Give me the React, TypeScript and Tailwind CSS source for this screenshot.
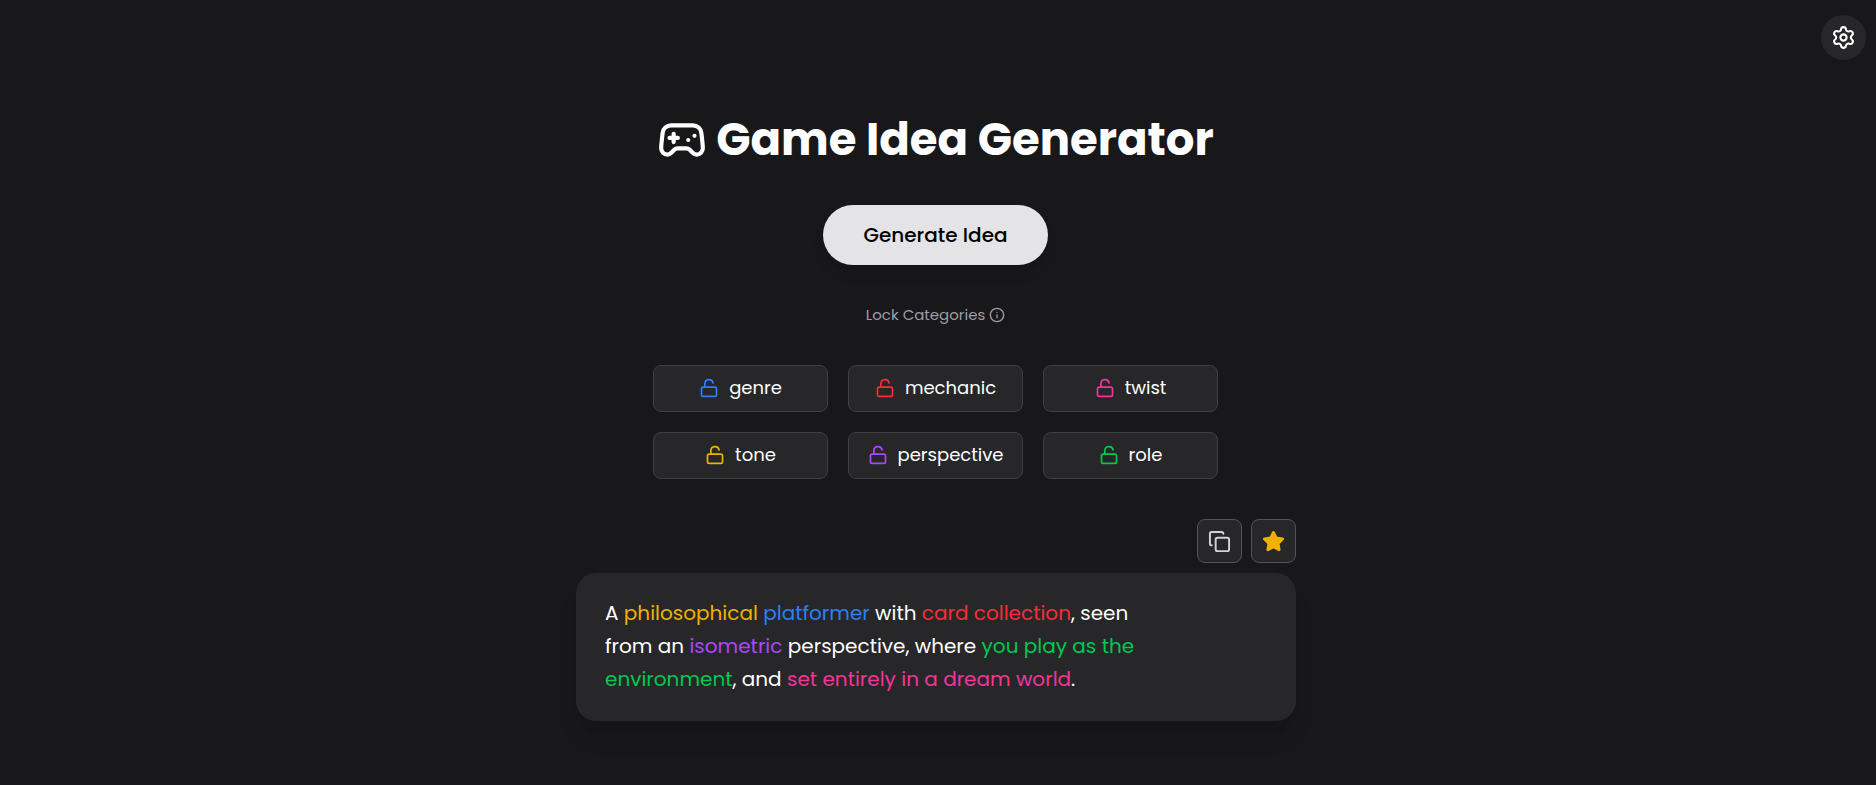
import { useState } from "react";
import { Copy, Gamepad2, Info, LockOpen, Settings, Star } from "lucide-react";

const categories = [
  { name: "genre", color: "text-[#2b7fff]" },
  { name: "mechanic", color: "text-[#fb2c36]" },
  { name: "twist", color: "text-[#f6339a]" },
  { name: "tone", color: "text-[#f0b100]" },
  { name: "perspective", color: "text-[#ad46ff]" },
  { name: "role", color: "text-[#00c950]" },
];

const actionButton =
  "flex h-11 w-[45px] items-center justify-center rounded-lg border border-[#52525c] bg-[#27272a] text-[#d4d4d8]";

export default function App() {
  const [locked, setLocked] = useState<string[]>([]);
  const [favorite, setFavorite] = useState(true);

  const toggle = (name: string) =>
    setLocked((list) =>
      list.includes(name) ? list.filter((n) => n !== name) : [...list, name],
    );

  return (
    <div className="relative min-h-screen bg-[#18181b] font-['Poppins','Inter',sans-serif] text-white">
      <button
        type="button"
        aria-label="Settings"
        className="absolute top-[15px] right-[10px] flex size-[45px] items-center justify-center rounded-full bg-[#27272a]"
      >
        <Settings size={25} />
      </button>

      <main className="mx-auto flex w-full max-w-[724px] flex-col pt-[110px] pr-1 pb-16">
        <div className="flex flex-col items-center pr-px">
          <h1 className="flex h-[60px] items-center gap-[9px] text-[45px] font-bold whitespace-nowrap">
            <Gamepad2 size={50} />
            Game Idea Generator
          </h1>

          <button
            type="button"
            className="mt-[35px] h-[60px] w-[225px] rounded-full bg-[#e4e4e7] text-xl font-medium text-black shadow-lg"
          >
            Generate Idea
          </button>

          <p className="mt-10 flex h-5 items-center gap-1 text-[15px] text-[#9f9fa9]">
            Lock Categories
            <Info size={16} />
          </p>

          <div className="mt-10 grid grid-cols-3 gap-5">
            {categories.map(({ name, color }) => (
              <button
                key={name}
                type="button"
                aria-pressed={locked.includes(name)}
                onClick={() => toggle(name)}
                className="flex h-[47px] w-[175px] items-center justify-center gap-2.5 rounded-lg border border-[#3f3f46] bg-[#27272a] pb-px text-lg"
              >
                <LockOpen size={20} className={color} />
                {name}
              </button>
            ))}
          </div>
        </div>

        <div className="mt-10 flex gap-[9px] self-end">
          <button type="button" aria-label="Copy idea" className={actionButton}>
            <Copy size={23} />
          </button>
          <button
            type="button"
            aria-label="Favorite idea"
            aria-pressed={favorite}
            onClick={() => setFavorite(!favorite)}
            className={actionButton}
          >
            <Star
              size={23}
              className={favorite ? "fill-[#f0b100] text-[#f0b100]" : ""}
            />
          </button>
        </div>

        <section className="mt-2.5 w-full rounded-[20px] bg-[#27272a] px-[29px] pt-6 pb-[25px] shadow-xl">
          <p className="max-w-[560px] text-xl leading-[33px]">
            A <span className="text-[#f0b100]">philosophical</span>{" "}
            <span className="text-[#2b7fff]">platformer</span> with{" "}
            <span className="text-[#fb2c36]">card collection</span>, seen from an{" "}
            <span className="text-[#ad46ff]">isometric</span> perspective, where{" "}
            <span className="text-[#00c950]">you play as the environment</span>,
            and{" "}
            <span className="text-[#f6339a]">set entirely in a dream world</span>.
          </p>
        </section>
      </main>
    </div>
  );
}
